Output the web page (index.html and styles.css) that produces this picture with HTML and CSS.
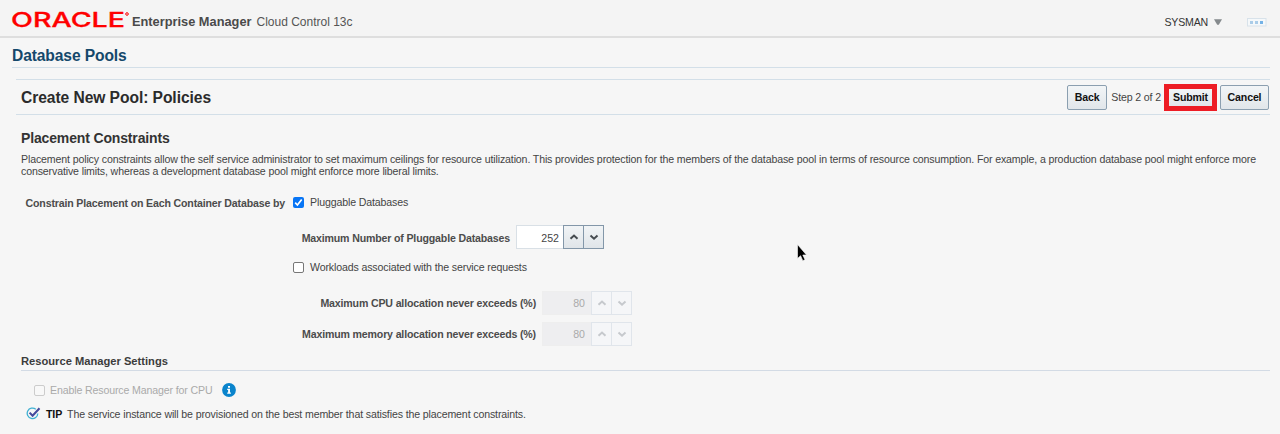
FILE: index.html
```html
<!DOCTYPE html>
<html lang="en">
<head>
<meta charset="utf-8">
<title>Enterprise Manager Cloud Control 13c</title>
<link rel="stylesheet" href="styles.css">
</head>
<body>
<header class="topbar">
  <svg class="logo" width="118" height="18" viewBox="0 0 118 18" role="img">
    <text class="logo-text" x="-1" y="15.5" textLength="114" lengthAdjust="spacingAndGlyphs">ORACLE</text>
    <circle cx="115" cy="3" r="1.3" fill="none" stroke="#f00"/>
  </svg>
  <span class="product">Enterprise Manager</span>
  <span class="edition">Cloud Control 13c</span>
  <span class="user">SYSMAN</span>
  <svg class="caret" width="8" height="6" viewBox="0 0 8 6"><path d="M0 .3h8L4.8 5.8H3.2z" fill="#858a8d"/></svg>
  <svg class="status" width="20" height="9" viewBox="0 0 20 9">
    <rect x=".5" y=".5" width="18.5" height="7.5" fill="#f5f8fa" stroke="#d8e2ea"/>
    <path d="M3 3h3v3H3z" fill="#aacce8"/><path d="M8 3h3v3H8z" fill="#aacce8"/><path d="M13 3h3v3h-3z" fill="#74b2e6"/>
  </svg>
</header>
<main>
  <h1 class="page-title">Database Pools</h1>
  <section class="step-bar">
    <h2 class="step-title">Create New Pool: Policies</h2>
    <button class="btn back">Back</button>
    <span class="step">Step 2 of 2</span>
    <button class="btn submit">Submit</button>
    <button class="btn cancel">Cancel</button>
  </section>
  <h3 class="section-title">Placement Constraints</h3>
  <p class="intro">Placement policy constraints allow the self service administrator to set maximum ceilings for resource utilization. This provides protection for the members of the database pool in terms of resource consumption. For example, a production database pool might enforce more<br>conservative limits, whereas a development database pool might enforce more liberal limits.</p>
  <div class="row row-pdb">
    <b class="label label-main">Constrain Placement on Each Container Database by</b>
    <span class="check"><svg width="11" height="11" viewBox="0 0 11 11"><rect width="11" height="11" rx="2" fill="#0875f5"/><path d="M2.2 5.7l2.2 2.3 4.3-5.6" fill="none" stroke="#fff" stroke-width="1.7"/></svg></span>
    <span class="option">Pluggable Databases</span>
  </div>
  <div class="row row-max">
    <b class="label label-max">Maximum Number of Pluggable Databases</b>
    <div class="spin">
      <span class="value">252</span>
      <span class="arrow"><svg width="10" height="8" viewBox="0 0 10 8"><path d="M1.5 5.7L5 2.5l3.5 3.2"/></svg></span>
      <span class="arrow"><svg width="10" height="8" viewBox="0 0 10 8"><path d="M1.5 2.5L5 5.7l3.5-3.2"/></svg></span>
    </div>
  </div>
  <div class="row row-work">
    <span class="check empty"></span>
    <span class="option">Workloads associated with the service requests</span>
  </div>
  <div class="row row-limit row-cpu">
    <b class="label label-limit">Maximum CPU allocation never exceeds (%)</b>
    <div class="spin off">
      <span class="value">80</span>
      <span class="arrow"><svg width="10" height="8" viewBox="0 0 10 8"><path d="M1.5 5.7L5 2.5l3.5 3.2"/></svg></span>
      <span class="arrow"><svg width="10" height="8" viewBox="0 0 10 8"><path d="M1.5 2.5L5 5.7l3.5-3.2"/></svg></span>
    </div>
  </div>
  <div class="row row-limit">
    <b class="label label-limit">Maximum memory allocation never exceeds (%)</b>
    <div class="spin off">
      <span class="value">80</span>
      <span class="arrow"><svg width="10" height="8" viewBox="0 0 10 8"><path d="M1.5 5.7L5 2.5l3.5 3.2"/></svg></span>
      <span class="arrow"><svg width="10" height="8" viewBox="0 0 10 8"><path d="M1.5 2.5L5 5.7l3.5-3.2"/></svg></span>
    </div>
  </div>
  <h4 class="sub-title">Resource Manager Settings</h4>
  <div class="row row-enable">
    <span class="check empty faded"></span>
    <span class="option">Enable Resource Manager for CPU</span>
    <svg class="info" width="14" height="14" viewBox="0 0 14 14"><circle cx="7" cy="7" r="6.9" fill="#0a84cc"/><path d="M6 3h2v1.7H6zM5.2 5.8H8v3.8h.9v1.2H5.2V9.6h.9V7h-.9z" fill="#fff"/></svg>
  </div>
  <div class="row row-tip">
    <svg class="tip-icon" width="15" height="14" viewBox="0 0 15 14"><path d="M9.8 2.2A5.3 5.3 0 1 0 11.800 6.500" fill="none" stroke="#3fb0d2" stroke-width="1.3"/><path d="M3.6 5.6l3 3.2L13.500 1.300" fill="none" stroke="#454a9c" stroke-width="2.100"/></svg>
    <b class="tip">TIP</b>
    <span>The service instance will be provisioned on the best member that satisfies the placement constraints.</span>
  </div>
</main>
<svg class="cursor" width="10" height="18" viewBox="0 0 10 18"><path d="M.5.5v14l3.100-2.800 2.200 5 2.200-1-2.200-4.700H9.500z" fill="#000" stroke="#fff" stroke-width=".6"/></svg>
</body>
</html>
```
FILE: styles.css
```css
* { box-sizing: border-box; }
body {
  margin: 0;
  height: 434px;
  overflow: hidden;
  background: #f6f6f6;
  color: #444;
  font: 10.6px/12px "Liberation Sans", Arial, sans-serif;
  letter-spacing: -.134px;
  white-space: nowrap;
}
h1, h2, h3, h4, p { margin: 0; }
svg { display: block; flex: none; }

.topbar {
  height: 38px;
  padding: 8px 13px 0 12px;
  border-bottom: 2px solid #dedede;
  background: #f4f4f4;
  display: flex;
  align-items: center;
}
.logo { margin: -5px 2px 0 0; overflow: visible; }
.logo-text { font: 500 19.8px Inter, sans-serif; letter-spacing: 0; fill: #f00; stroke: #f00; stroke-width: .3px; }
.product { font-size: 12.8px; font-weight: bold; letter-spacing: 0; color: #4a4a4a; }
.edition { margin-left: 5px; font-size: 12px; letter-spacing: 0; color: #555; }
.user { margin-left: auto; color: #333; letter-spacing: -.2px; }
.caret { margin-left: 6px; }
.status { margin-left: 25px; }

.page-title {
  height: 30px;
  margin: 0 10px 0 12px;
  border-bottom: 1px solid #d3dfe8;
  font-size: 15.6px;
  letter-spacing: -.11px;
  line-height: 36px;
  color: #14486b;
}
.step-bar {
  height: 36px;
  margin: 11px 10px 0 16px;
  padding: 0 1px 0 5px;
  border: solid #d3dfe8;
  border-width: 1px 0;
  display: flex;
  align-items: center;
}
.step-title { margin-right: auto; padding-top: 2px; font-size: 15.6px; letter-spacing: -.06px; line-height: 18px; color: #2b2b2b; }
.btn {
  height: 25px;
  padding: 0;
  border: 1px solid #8b9fb0;
  border-radius: 2px;
  background: linear-gradient(#f2f5f7, #e1e6ea);
  color: #111;
  font: bold 10.6px "Liberation Sans", Arial, sans-serif;
  letter-spacing: -.15px;
}
.back { width: 40px; }
.step { margin: 0 3px 0 4px; }
.submit { width: 53px; height: 27px; border: 5px solid #ed1c24; border-radius: 0; }
.cancel { width: 49px; margin-left: 3px; }

.section-title { margin: 15px 0 0 21px; font-size: 14px; letter-spacing: -.15px; line-height: 16px; color: #333; }
.intro { margin: 7px 0 0 21px; }

.row { display: flex; align-items: center; }
.label { text-align: right; color: #4c4c4c; letter-spacing: -.16px; }
.check { width: 11px; height: 11px; flex: none; }
.empty { border: 1px solid #777; border-radius: 2px; background: #fff; }
.faded { border-color: #ccc; background: #f8f8f8; }
.option { margin-left: 5px; }

.row-pdb { height: 14px; margin-top: 18px; }
.label-main { width: 285px; margin-right: 8px; padding-top: 1px; }
.row-max { height: 24px; margin-top: 16px; }
.label-max { width: 510px; padding-top: 1px; }
.row-work { height: 14px; margin: 11px 0 0 293px; }
.row-pdb .option, .row-work .option { margin-left: 6px; }
.row-limit { height: 25px; margin-bottom: 6px; }
.row-limit.row-cpu { margin-top: 16px; }
.label-limit { width: 536px; }

.spin { display: flex; height: 24px; margin-left: 6px; }
.value {
  width: 47px;
  padding-right: 4px;
  border: 1px solid #d9e0e6;
  border-right: 0;
  background: #fff;
  letter-spacing: 0;
  line-height: 24px;
  text-align: right;
}
.arrow {
  width: 21px;
  border: 1px solid #8397a9;
  background: linear-gradient(#f1f4f6, #e0e5e9);
  display: flex;
  align-items: center;
  justify-content: center;
}
.arrow + .arrow { width: 20px; border-left: 0; }
.arrow path { fill: none; stroke: #454b50; stroke-width: 2; }
.off .value { width: 49px; padding-right: 6px; border-color: #eee; background: #eeeef0; color: #aaa; line-height: 22px; }
.off .arrow { border-color: #e0e5eb; background: #f5f6f8; }
.off path { stroke: #c6c9cd; }

.sub-title {
  height: 16px;
  margin: 9px 10px 0 21px;
  border-bottom: 1px solid #d3dbe5;
  font-size: 11.16px;
  letter-spacing: 0;
  line-height: 13px;
  color: #3c3c3c;
}
.row-enable { height: 14px; margin: 12px 0 0 34px; color: #aaa; }
.info { margin-left: 9px; }
.row-tip { height: 14px; margin: 10px 0 0 26px; }
.tip { margin: 0 5px; color: #111; }

.cursor { position: absolute; left: 797px; top: 244px; }
```
